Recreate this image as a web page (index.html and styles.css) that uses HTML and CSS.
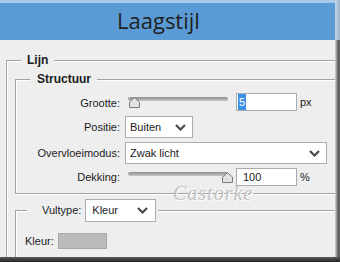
FILE: index.html
```html
<!DOCTYPE html>
<html lang="nl">
<head>
    <meta charset="UTF-8">
    <meta name="viewport" content="width=device-width, initial-scale=1.0">
    <title>Laagstijl</title>
    <link rel="stylesheet" href="styles.css">
</head>
<body>
    <div class="window">
        <div class="frame">
            <div class="main">
                <div class="titlebar">Laagstijl</div>

                <div class="panel">
                    <!-- Lijn group -->
                    <div class="group group-lijn">
                        <div class="group-head"><span class="legend">Lijn</span></div>

                        <!-- Structuur group -->
                        <div class="group group-structuur">
                            <div class="group-head"><span class="legend legend-structuur">Structuur</span></div>
                            <div class="fields">
                                <label class="field-label">Grootte:</label>
                                <div class="control">
                                    <div class="slider">
                                        <div class="track"></div>
                                        <svg class="thumb thumb-start" width="11" height="11" viewBox="0 0 11 11"><path d="M0.5 10.5 V5 L5.5 0.7 L10.5 5 V10.5 Z" fill="#e2e2e2" stroke="#7a7a7a"/></svg>
                                    </div>
                                    <div class="num-input"><span class="selected">5</span></div>
                                    <span class="unit">px</span>
                                </div>

                                <label class="field-label">Positie:</label>
                                <div class="control">
                                    <div class="select select-positie">
                                        <span>Buiten</span>
                                        <svg width="11" height="7" viewBox="0 0 11 7"><polyline points="1,1 5.5,5.5 10,1" fill="none" stroke="#4a4a4a" stroke-width="2.2"/></svg>
                                    </div>
                                </div>

                                <label class="field-label">Overvloeimodus:</label>
                                <div class="control">
                                    <div class="select select-modus">
                                        <span>Zwak licht</span>
                                        <svg width="11" height="7" viewBox="0 0 11 7"><polyline points="1,1 5.5,5.5 10,1" fill="none" stroke="#4a4a4a" stroke-width="2.2"/></svg>
                                    </div>
                                </div>

                                <label class="field-label">Dekking:</label>
                                <div class="control">
                                    <div class="slider">
                                        <div class="track"></div>
                                        <svg class="thumb thumb-end" width="11" height="11" viewBox="0 0 11 11"><path d="M0.5 10.5 V5 L5.5 0.7 L10.5 5 V10.5 Z" fill="#e2e2e2" stroke="#7a7a7a"/></svg>
                                    </div>
                                    <div class="num-input num-pad">100</div>
                                    <span class="unit">%</span>
                                </div>
                            </div>
                        </div>

                        <!-- Vultype group -->
                        <div class="group group-fill">
                            <div class="group-head">
                                <span class="legend legend-fill">
                                    Vultype:
                                    <span class="select select-fill">
                                        <span>Kleur</span>
                                        <svg width="11" height="7" viewBox="0 0 11 7"><polyline points="1,1 5.5,5.5 10,1" fill="none" stroke="#4a4a4a" stroke-width="2.2"/></svg>
                                    </span>
                                </span>
                            </div>
                            <div class="color-row">
                                <span>Kleur:</span>
                                <span class="swatch"></span>
                            </div>
                        </div>
                    </div>
                </div>
            </div>

            <div class="edge-right">
                <div class="edge-top"></div>
                <div class="edge-body"></div>
            </div>
        </div>
        <div class="edge-bottom"></div>

        <div class="watermark">Castorke</div>
    </div>
</body>
</html>
```

FILE: styles.css
```css
* {
    box-sizing: border-box;
}

body {
    margin: 0;
    font-family: "Liberation Sans", Arial, sans-serif;
    font-size: 11px;
    color: #1b1b1b;
}

.window {
    position: relative;
    display: flex;
    flex-direction: column;
    width: 340px;
    height: 262px;
    overflow: hidden;
}

.frame {
    display: flex;
    flex: 1;
    min-height: 0;
}

.main {
    display: flex;
    flex-direction: column;
    width: 335px;
}

.titlebar {
    flex: none;
    height: 40px;
    padding-left: 117px;
    background: linear-gradient(#a9cbea 0, #a9cbea 3px, #5b9bd5 3px);
    font-family: "Open Sans", sans-serif;
    font-size: 22px;
    line-height: 40px;
    color: #1f1f1f;
}

.panel {
    display: flex;
    flex: 1;
    flex-direction: column;
    padding: 20px 0 0 6px;
    background-color: #eeeeee;
}

/* Etched group boxes */
.group {
    border: 1px solid #a3a3a3;
    border-right: none;
    box-shadow: inset 1px 1px 0 #ffffff;
}

.group-head {
    display: flex;
    align-items: center;
    height: 0;
    margin: -1px 0 1px;
}

.legend {
    display: flex;
    align-items: center;
    margin-left: 14px;
    padding: 0 6px;
    background-color: #eeeeee;
    font-size: 12px;
    font-weight: bold;
    line-height: 14px;
}

.group-lijn {
    display: flex;
    flex: 1;
    flex-direction: column;
    border-bottom: none;
}

.group-structuur {
    margin: 18px 0 0 8px;
    box-shadow: inset 1px 1px 0 #ffffff, 0 1px 0 #ffffff;
}

.legend-structuur {
    padding: 0 6px 0 7px;
}

.fields {
    display: grid;
    grid-template-columns: 104px 1fr;
    grid-template-rows: 19px 22px 22px 18px;
    column-gap: 5px;
    row-gap: 4px;
    align-items: center;
    padding: 13px 0 7px;
}

.field-label {
    text-align: right;
}

.control {
    display: flex;
    align-items: center;
}

.fields .control:first-of-type {
    align-self: start;
}

.slider {
    position: relative;
    width: 100px;
    height: 11px;
    margin-left: 3px;
}

.track {
    height: 4px;
    border-radius: 2px;
    background: linear-gradient(#8d8d8d, #c6c6c6);
}

/* thumb sits on top of the track */
.thumb {
    position: absolute;
    top: 0;
}

.thumb-start {
    left: 1px;
}

.thumb-end {
    right: -5px;
}

.num-input {
    width: 61px;
    height: 18px;
    margin-left: 8px;
    padding-left: 1px;
    border: 1px solid #ababab;
    background-color: #ffffff;
    line-height: 16px;
}

.num-pad {
    padding-left: 6px;
}

.selected {
    display: inline-block;
    padding: 0 1px;
    background-color: #3d8ee6;
    color: #ffffff;
}

.unit {
    margin-left: 3px;
}

.select {
    display: flex;
    align-items: center;
    justify-content: space-between;
    height: 22px;
    padding: 0 6px 0 4px;
    border: 1px solid #adadad;
    background-color: #ffffff;
    font-weight: normal;
    font-size: 11px;
}

.select-positie {
    width: 68px;
}

.select-modus {
    width: 202px;
}

.group-fill {
    display: flex;
    flex: 1;
    flex-direction: column;
    margin: 16px 0 0 8px;
    border-bottom: none;
}

.legend-fill {
    gap: 4px;
    margin-left: 11px;
    padding: 0 2px 0 15px;
    font-size: 11px;
    font-weight: normal;
}

.select-fill {
    width: 71px;
    height: 23px;
    padding-left: 6px;
    padding-right: 7px;
}

.color-row {
    display: flex;
    align-items: center;
    gap: 4px;
    margin: 22px 0 0 9px;
}

.swatch {
    width: 49px;
    height: 16px;
    border: 1px solid #a9a9a9;
    background-color: #bbbbbb;
}

/* window frame edges */
.edge-right {
    display: flex;
    flex-direction: column;
    width: 5px;
}

.edge-top {
    height: 40px;
    background: linear-gradient(to right, #c3d4e4, #9db3c7);
}

.edge-body {
    flex: 1;
    background: linear-gradient(to right, #d6d6d6 0, #8a8a8a 40%, #555555 70%, #7a7a7a 100%);
}

.edge-bottom {
    flex: none;
    height: 5px;
    background: linear-gradient(#5a5a5a, #262626);
}

.watermark {
    position: absolute;
    left: 173px;
    top: 183px;
    font-family: "Liberation Serif", "Times New Roman", serif;
    font-style: italic;
    font-size: 20px;
    line-height: 20px;
    letter-spacing: 1px;
    color: #c2c2c2;
    text-shadow: 1px 1px 0 #ffffff;
}
```
